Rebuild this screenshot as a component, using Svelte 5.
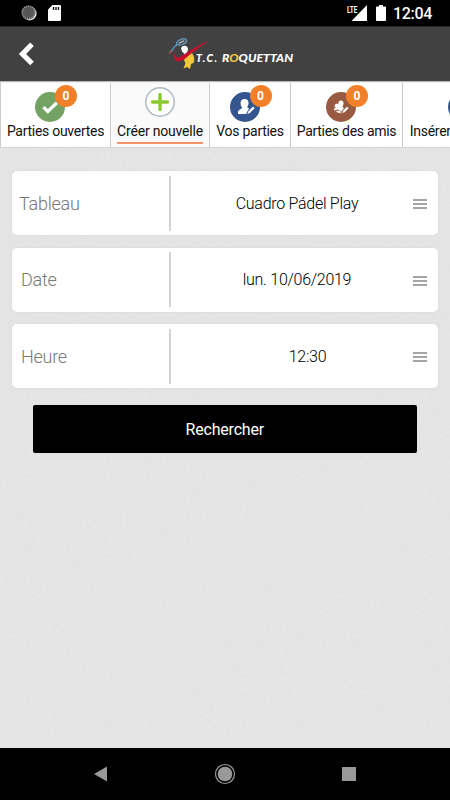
<script lang="ts">
	type Tab = { label: string; icon: 'check' | 'plus' | 'user' | 'group'; color: string; width: number; count?: number };

	const tabs: Tab[] = [
		{ label: 'Parties ouvertes', icon: 'check', color: '#73a263', width: 110, count: 0 },
		{ label: 'Créer nouvelle', icon: 'plus', color: '#ffffff', width: 99 },
		{ label: 'Vos parties', icon: 'user', color: '#35558f', width: 81, count: 0 },
		{ label: 'Parties des amis', icon: 'group', color: '#985b42', width: 112, count: 0 },
		{ label: 'Insérer les résultats', icon: 'user', color: '#35558f', width: 131 }
	];

	let active = $state(1);

	const fields = [
		{ label: 'Tableau', value: 'Cuadro Pádel Play' },
		{ label: 'Date', value: 'lun. 10/06/2019' },
		{ label: 'Heure', value: '12:30', time: true }
	];
</script>

<div class="screen">
	<div class="statusbar">
		<svg class="sync" width="16" height="16" viewBox="0 0 16 16">
			<circle cx="8.6" cy="8.4" r="7" fill="#f2f2f2" />
			<circle cx="7.5" cy="7.5" r="7" fill="#555" />
			<circle cx="7.5" cy="7.5" r="6.2" fill="none" stroke="#999" stroke-width="1.6" stroke-dasharray="1 1" />
		</svg>
		<svg class="sdcard" width="13" height="16" viewBox="0 0 13 16">
			<path d="M4.5 0H12q1 0 1 1v14q0 1-1 1H1q-1 0-1-1V4.500z" fill="#fff" />
			<path d="M5.500 2v3M8 2v3M10.500 2v3" stroke="#111" stroke-width="1.400" />
		</svg>
		<span class="grow"></span>
		<svg class="signal" width="20" height="16" viewBox="0 0 20 16">
			<path d="M20 0v16H4.500z" fill="#fff" />
			<text x="0" y="7.500" textLength="10.5" lengthAdjust="spacingAndGlyphs">LTE</text>
		</svg>
		<svg class="battery" width="10" height="16" viewBox="0 0 10 16">
			<path d="M3 0h4v1.500h2q1 0 1 1V15q0 1-1 1H1q-1 0-1-1V2.500q0-1 1-1h2z" fill="#fff" />
		</svg>
		<span class="clock">12:04</span>
	</div>

	<header>
		<button class="back" aria-label="Retour">
			<svg width="17" height="24" viewBox="0 0 17 24">
				<path d="M14 2.200L4.500 12l9.500 9.500" fill="none" stroke="#fff" stroke-width="5.200" />
			</svg>
		</button>
		<svg class="logo" width="128" height="34" viewBox="0 0 128 34">
			<path d="M1 15.500L5 11.500" stroke="#a84444" stroke-width="2" />
			<path d="M3 13.500q3-5 7-8" fill="none" stroke="#4c87ae" stroke-width="1.600" />
			<ellipse cx="13.500" cy="4" rx="5.300" ry="2.700" transform="rotate(-22 13.500 4)" fill="#555" stroke="#5f9cc4" stroke-width="1.300" />
			<path d="M11 5.200l5-2.400" stroke="#c9d6dd" stroke-width="1" />
			<path d="M13 10q1-2.500 4-2.300 3 .5 3 3.500-.5 4-3.500 5.300-.8-2-2.500-3z" fill="#fff" />
			<path d="M24 15q3.500 5 1.500 10l-2.500 1-1 5-3-2-3.500 1.500 2-5.500-1.500-3q2-5 8-7z" fill="#f0c93a" />
			<path d="M5 13q1.500 6.500 5 6.500 3-.5 10-6L42 1.500 22 16.500q-8 7.500-12 7-5-1-5-10.500z" fill="#c8102c" />
			<text x="28" y="24" textLength="21">T.C.</text>
			<text x="54" y="24" textLength="71" lengthAdjust="spacingAndGlyphs">R<tspan fill="#f0c93a">O</tspan>QUETTAN</text>
		</svg>
	</header>

	<nav>
		{#each tabs as tab, i}
			<button class="tab" class:active={i === active} style="width: {tab.width}px" onclick={() => (active = i)}>
				<span class="icon" class:outlined={tab.icon === 'plus'} style="background: {tab.color}">
					<svg width="30" height="30" viewBox="0 0 30 30">
						{#if tab.icon === 'check'}
							<path d="M8.500 15.200l4.300 4.300 9-8.800" fill="none" stroke="#fff" stroke-width="3.300" />
						{:else if tab.icon === 'plus'}
							<path d="M15 7.500v15M7.500 15h15" stroke="#8aca2c" stroke-width="3.400" stroke-linecap="round" />
						{:else if tab.icon === 'user'}
							<path d="M14.500 7c3 0 4.300 2 4 4.500-.2 2-1 2.800-1.300 3.800l1.800 1.200-3 5.500H8v-2.800c1-1.500 3-2.200 4-3 0-1.400-1.500-2.400-1.500-4.700 0-2.500 1.300-4.500 4-4.500z" fill="#fff" />
							<path d="M17 22.500l.8-3 5.200-5.300 2 2-5.300 5.300z" fill="#fff" stroke={tab.color} stroke-width=".7" />
						{:else}
							<path d="M14.800 8.500c2 0 3 1.500 2.700 3.500-.3 1.500-1 2-1 3l1.500 1-3 4-3.500-2.500-3.500 1v-2l2-1-1.500-1 .5-2 2-1 1.500 1c-.5-2 .5-4 2.300-4z" fill="#fff" />
							<path d="M16 21.500l1-3 4-4 1.800 1.800-4 4zM9 19l5-.5 2 3-4-.5z" fill="#fff" stroke={tab.color} stroke-width=".5" />
						{/if}
					</svg>
					{#if tab.count !== undefined}
						<span class="badge">{tab.count}</span>
					{/if}
				</span>
				<span class="label">{tab.label}</span>
			</button>
		{/each}
	</nav>

	<main>
		<!-- paper grain -->
		<svg class="grain" width="450" height="600" aria-hidden="true">
			<filter id="paper">
				<feTurbulence type="fractalNoise" baseFrequency="0.3" numOctaves="2" seed="4" />
				<feColorMatrix type="saturate" values="0" />
			</filter>
			<rect width="450" height="600" filter="url(#paper)" />
		</svg>
		{#each fields as field, i}
			<div class="field">
				<span class="name" class:first={i === 0}>{field.label}</span>
				<span class="value" class:time={field.time}>{field.value}</span>
				<span class="handle"><i></i><i></i><i></i></span>
			</div>
		{/each}
		<button class="search">Rechercher</button>
	</main>

	<footer>
		<svg width="14" height="16" viewBox="0 0 14 16"><path d="M0 8L13 .5v15z" fill="#999" /></svg>
		<svg width="22" height="22" viewBox="0 0 22 22">
			<circle cx="11" cy="11" r="9.500" fill="none" stroke="#999" stroke-width="1.200" />
			<circle cx="11" cy="11" r="7.300" fill="#999" />
		</svg>
		<svg width="14" height="14" viewBox="0 0 14 14"><rect width="14" height="14" rx=".6" fill="#999" /></svg>
	</footer>
</div>

<style>
	:global(body) {
		background: #000;
	}

	.screen {
		width: 450px;
		height: 800px;
		display: flex;
		flex-direction: column;
		overflow: hidden;
		font-family: Roboto, 'Liberation Sans', sans-serif;
	}

	button {
		border: 0;
		padding: 0;
		background: none;
		font: inherit;
		color: inherit;
	}

	/* Status bar */
	.statusbar {
		height: 26px;
		flex-shrink: 0;
		display: flex;
		align-items: center;
		background: #000;
		color: #fff;
		box-sizing: border-box;
		padding: 0 18px 0 21px;
	}

	.sdcard { margin-left: 11px; }
	.grow { flex: 1; }
	.signal text { font: 700 9px Roboto, sans-serif; fill: #fff; }
	.battery { margin-left: 9px; }
	.clock {
		width: 39px;
		margin-left: 7px;
		padding-top: 1px;
		font-size: 16px;
		letter-spacing: -0.3px;
		font-weight: 500;
		white-space: nowrap;
	}

	/* Header */
	header {
		height: 55px;
		flex-shrink: 0;
		display: flex;
		align-items: flex-start;
		background: #414141;
		border-bottom: 1px solid #b9b9b9;
		box-shadow: inset 0 1px #252525;
	}

	.back { margin: 16px 0 0 18px; height: 24px; width: 17px; }
	.back svg { display: block; }
	.logo { margin: 12px 0 0 133px; overflow: visible; }
	.logo text {
		font: italic 900 10.500px Lato, sans-serif;
		fill: #fff;
	}

	/* Tabs */
	nav {
		height: 66px;
		flex-shrink: 0;
		display: flex;
		overflow: hidden;
		border-top: 1px solid #eee;
		border-left: 1px solid #ccc;
		border-bottom: 1px solid #d5d5d5;
		box-sizing: border-box;
		background: #fff;
	}

	.tab {
		flex-shrink: 0;
		box-sizing: border-box;
		display: flex;
		flex-direction: column;
		align-items: center;
		padding-top: 9px;
		border-right: 1.500px solid #ccc;
	}

	.tab.active {
		background: #fafafa;
		padding-top: 4px;
	}

	.icon {
		position: relative;
		width: 30px;
		height: 30px;
		left: -5.500px;
		border-radius: 50%;
	}

	.icon.outlined {
		left: 0;
		box-shadow: inset 0 0 0 1.500px #acbac5;
	}

	.icon svg { display: block; }

	.badge {
		position: absolute;
		left: 20px;
		top: -7px;
		width: 22px;
		height: 22px;
		border-radius: 50%;
		background: #f28029;
		color: #fff;
		font-size: 12px;
		font-weight: 700;
		line-height: 23px;
		text-align: center;
	}

	.label {
		font-size: 14px;
		letter-spacing: -0.28px;
		line-height: 18px;
		color: #111;
		white-space: nowrap;
	}

	.active .label {
		margin-top: 5px;
		padding-bottom: 2px;
		letter-spacing: -0.2px;
		border-bottom: 2px solid #f4926a;
	}

	/* Form */
	main {
		position: relative;
		flex: 1;
		background: #e6e6e6;
		padding: 23px 12px 0;
	}

	.grain {
		position: absolute;
		inset: 0;
		opacity: 0.08;
	}

	.field {
		position: relative;
		display: flex;
		align-items: center;
		height: 64px;
		margin-bottom: 12.600px;
		background: #fff;
		border-radius: 5px;
		box-shadow: 0 0 2px rgba(0, 0, 0, 0.08);
	}

	.name {
		width: 159px;
		height: 55px;
		line-height: 56px;
		box-sizing: border-box;
		padding-left: 9px;
		border-right: 2px solid #d2d2d2;
		font-size: 18px;
		letter-spacing: -0.25px;
		font-weight: 300;
		color: #777;
	}

	.name.first { padding-left: 7px; }

	.value {
		flex: 1;
		padding-left: 10px;
		text-align: center;
		font-size: 16px;
		letter-spacing: -0.28px;
		font-weight: 300;
		color: #000;
	}

	.value.time { padding-left: 31px; }

	.handle {
		width: 14px;
		margin: 2px 11px 0 0;
		display: flex;
		flex-direction: column;
		gap: 2px;
	}

	.handle i {
		height: 2px;
		background: #a5a5a5;
	}

	.search {
		position: relative;
		display: block;
		width: 384.500px;
		height: 48px;
		margin: 17px 0 0 20.500px;
		border-radius: 2px;
		padding-top: 1px;
		background: #000;
		color: #fff;
		font-size: 16px;
		letter-spacing: -0.2px;
	}

	/* Android navigation */
	footer {
		height: 52px;
		flex-shrink: 0;
		box-sizing: border-box;
		display: flex;
		align-items: center;
		justify-content: space-between;
		padding: 0 94px;
		background: #000;
	}
</style>
